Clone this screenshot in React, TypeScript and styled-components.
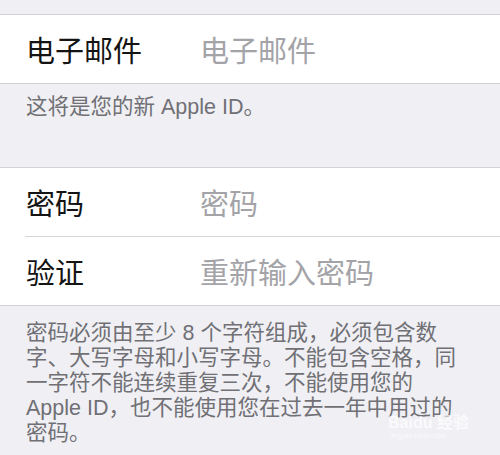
import styled, { createGlobalStyle } from "styled-components";

const GlobalStyle = createGlobalStyle`
  html, body {
    margin: 0;
    padding: 0;
    background: #efeff4;
  }
  body {
    font-family: "Noto Sans CJK SC", "Noto Sans", "Liberation Sans", sans-serif;
  }
`;

const Screen = styled.div`
  position: relative;
  width: 500px;
  height: 455px;
  overflow: hidden;
  background: #efeff4;
`;

const TopGap = styled.div`
  height: 14px;
  border-bottom: 1px solid #d3d2d7;
`;

const Group = styled.div`
  background: #ffffff;
  border-bottom: 1px solid #d3d2d7;
`;

const Row = styled.div`
  display: flex;
  align-items: center;
  height: 68px;
  padding-left: 26px;
`;

const Divider = styled.div`
  height: 1px;
  margin-left: 25px;
  background: #d6d5da;
`;

const Label = styled.div`
  width: 174px;
  flex-shrink: 0;
  font-size: 29px;
  color: #141414;
  white-space: nowrap;
`;

const Placeholder = styled.div`
  font-size: 29px;
  color: #a3a3a8;
  white-space: nowrap;
`;

const SectionFooter = styled.div`
  height: 84px;
  padding: 11px 27px 0 26px;
  border-bottom: 1px solid #d3d2d7;
  box-sizing: border-box;
  font-family: "Liberation Sans", "Noto Sans CJK SC", sans-serif;
  font-size: 21.5px;
  line-height: 25px;
  color: #707075;
`;

const Note = styled.div`
  padding: 15px 20px 0 26px;
  font-family: "Liberation Sans", "Noto Sans CJK SC", sans-serif;
  font-size: 21.5px;
  color: #707075;
`;

const NoteLine = styled.div`
  height: 25px;
  line-height: 25px;
  white-space: nowrap;
`;

const Watermark = styled.div`
  position: absolute;
  left: 388px;
  top: 414px;
  display: flex;
  flex-direction: column;
  align-items: flex-start;
  color: rgba(255, 255, 255, 0.7);
  font-family: "Liberation Sans", "Noto Sans CJK SC", sans-serif;
  pointer-events: none;
`;

const MarkTitle = styled.div`
  font-size: 16px;
  font-weight: bold;
  line-height: 17px;
`;

const MarkUrl = styled.div`
  font-size: 7px;
  line-height: 9px;
  margin-left: 2px;
`;

const noteLines = [
  "密码必须由至少 8 个字符组成，必须包含数",
  "字、大写字母和小写字母。不能包含空格，同",
  "一字符不能连续重复三次，不能使用您的",
  "Apple ID，也不能使用您在过去一年中用过的",
  "密码。",
];

export default function App() {
  return (
    <Screen>
      <GlobalStyle />
      <TopGap />
      <Group>
        <Row>
          <Label>电子邮件</Label>
          <Placeholder>电子邮件</Placeholder>
        </Row>
      </Group>
      <SectionFooter>这将是您的新 Apple ID。</SectionFooter>
      <Group>
        <Row>
          <Label>密码</Label>
          <Placeholder>密码</Placeholder>
        </Row>
        <Divider />
        <Row>
          <Label>验证</Label>
          <Placeholder>重新输入密码</Placeholder>
        </Row>
      </Group>
      <Note>
        {noteLines.map((line) => (
          <NoteLine key={line}>{line}</NoteLine>
        ))}
      </Note>
      <Watermark>
        <MarkTitle>Baidu 经验</MarkTitle>
        <MarkUrl>jingyan.baidu.com</MarkUrl>
      </Watermark>
    </Screen>
  );
}
